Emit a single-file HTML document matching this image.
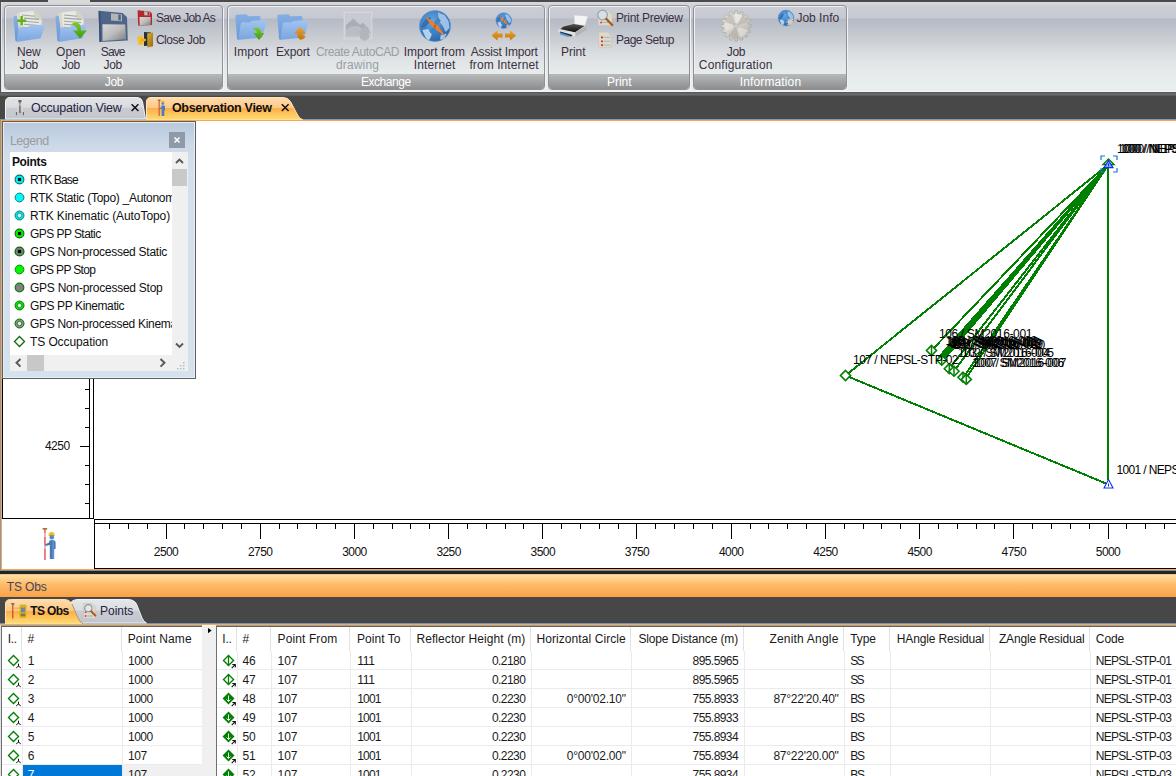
<!DOCTYPE html><html><head><meta charset="utf-8"><title>Observation View</title><style>
*{box-sizing:border-box;margin:0;padding:0}
html,body{width:1176px;height:776px;overflow:hidden;background:#484848;font-family:"Liberation Sans",sans-serif;font-size:12px;color:#1b1b1b}
.abs{position:absolute}
.t{position:absolute;white-space:nowrap;display:block}
#ribbon{position:absolute;left:0;top:0;width:1176px;height:92px;border-top:2px solid #4a4a4a;border-bottom:1px solid #f4f4f4;
 background:linear-gradient(#d8dade 0,#d1d3d8 3px,#cbced4 4px,#c6c9d1 16px,#b6bac4 17px,#c0c4cc 28px,#cdd1d6 40px,#d9dcdf 50px,#e3e7e8 63px,#e7ecec 75px,#e9eeee 88px)}
#ribbon .ledge{position:absolute;left:0;top:0;width:1px;height:90px;background:#555;box-shadow:1px 0 0 0 #e2e4e8}
#ribbon .ltab{position:absolute;left:48px;top:-2px;width:42px;height:2px;background:#d9dad6}
.grp{position:absolute;top:3px;height:85px;border:1px solid #8e9197;border-radius:4px;box-shadow:1px 1px 0 0 #f0f2f3, inset 1px 1px 0 0 #eef0f2;overflow:hidden}
.grp .lab{position:absolute;left:0;right:0;bottom:0;height:15px;background:linear-gradient(#b7b9ba,#8c8e8f)}
#tabbar{position:absolute;left:0;top:93px;width:1176px;height:27px;background:linear-gradient(#626262 0,#6e6e6e 2px,#484848 3px,#484848 100%);border-bottom:1px solid #8797b0}
#main{position:absolute;left:0;top:120px;width:1176px;height:450px;background:#fff;border-top:1px solid #f5a94e;border-bottom:1px solid #f5a94e;overflow:hidden}
#bottomhdr{position:absolute;left:0;top:574px;width:1176px;height:23px;background:linear-gradient(#d8b070 0,#ffe0a0 1px,#ffd48f 4px,#fdbb6a 45%,#fba146 100%)}
#band{position:absolute;left:0;top:570px;width:1176px;height:4px;background:#242424;border-top:1px solid #7d8aa0}
#btabs{position:absolute;left:0;top:597px;width:1176px;height:27px;background:#474747}
.tbl{position:absolute;top:625px;height:160px;background:#fff;overflow:hidden}
.hl{position:absolute;height:1px;background:#ebebeb}
.vl{position:absolute;width:1px;background:#ebebeb}
</style></head><body>
<div id="ribbon"><div class="ltab"></div><div class="ledge"></div>
<div class="grp" style="left:4px;width:219px"><div class="lab"></div></div>
<div class="grp" style="left:227px;width:318px"><div class="lab"></div></div>
<div class="grp" style="left:548px;width:142px"><div class="lab"></div></div>
<div class="grp" style="left:693px;width:154px"><div class="lab"></div></div>
<span class="t" style="left:17.00px;top:42.84px;font-size:12px;line-height:14px;letter-spacing:-0.135px;color:#3a3042;">New</span>
<span class="t" style="left:19.40px;top:55.84px;font-size:12px;line-height:14px;letter-spacing:-0.249px;color:#3a3042;">Job</span>
<span class="t" style="left:56.00px;top:42.84px;font-size:12px;line-height:14px;letter-spacing:0.062px;color:#3a3042;">Open</span>
<span class="t" style="left:61.40px;top:55.84px;font-size:12px;line-height:14px;letter-spacing:-0.249px;color:#3a3042;">Job</span>
<span class="t" style="left:100.80px;top:42.84px;font-size:12px;line-height:14px;letter-spacing:-0.888px;color:#3a3042;">Save</span>
<span class="t" style="left:103.40px;top:55.84px;font-size:12px;line-height:14px;letter-spacing:-0.249px;color:#3a3042;">Job</span>
<span class="t" style="left:155.90px;top:9.24px;font-size:12px;line-height:14px;letter-spacing:-0.682px;color:#3a3042;">Save Job As</span>
<span class="t" style="left:155.90px;top:31.24px;font-size:12px;line-height:14px;letter-spacing:-0.473px;color:#3a3042;">Close Job</span>
<span class="t" style="left:233.80px;top:42.84px;font-size:12px;line-height:14px;letter-spacing:0.066px;color:#3a3042;">Import</span>
<span class="t" style="left:276.00px;top:42.84px;font-size:12px;line-height:14px;letter-spacing:-0.180px;color:#3a3042;">Export</span>
<span class="t" style="left:315.90px;top:42.84px;font-size:12px;line-height:14px;letter-spacing:-0.393px;color:#9a9da3;">Create AutoCAD</span>
<span class="t" style="left:335.90px;top:55.84px;font-size:12px;line-height:14px;letter-spacing:0.168px;color:#9a9da3;">drawing</span>
<span class="t" style="left:403.70px;top:42.84px;font-size:12px;line-height:14px;letter-spacing:-0.003px;color:#3a3042;">Import from</span>
<span class="t" style="left:413.70px;top:55.84px;font-size:12px;line-height:14px;letter-spacing:0.151px;color:#3a3042;">Internet</span>
<span class="t" style="left:470.80px;top:42.84px;font-size:12px;line-height:14px;letter-spacing:-0.196px;color:#3a3042;">Assist Import</span>
<span class="t" style="left:469.40px;top:55.84px;font-size:12px;line-height:14px;letter-spacing:0.091px;color:#3a3042;">from Internet</span>
<span class="t" style="left:560.90px;top:42.84px;font-size:12px;line-height:14px;letter-spacing:0.005px;color:#3a3042;">Print</span>
<span class="t" style="left:615.90px;top:9.24px;font-size:12px;line-height:14px;letter-spacing:-0.307px;color:#3a3042;">Print Preview</span>
<span class="t" style="left:615.90px;top:31.24px;font-size:12px;line-height:14px;letter-spacing:-0.462px;color:#3a3042;">Page Setup</span>
<span class="t" style="left:726.80px;top:42.84px;font-size:12px;line-height:14px;letter-spacing:-0.382px;color:#3a3042;">Job</span>
<span class="t" style="left:698.80px;top:55.84px;font-size:12px;line-height:14px;letter-spacing:0.187px;color:#3a3042;">Configuration</span>
<span class="t" style="left:796.40px;top:9.24px;font-size:12px;line-height:14px;letter-spacing:0.013px;color:#3a3042;">Job Info</span>
<span class="t" style="left:104.80px;top:73.24px;font-size:12px;line-height:14px;letter-spacing:-0.382px;color:#fff;">Job</span>
<span class="t" style="left:360.90px;top:73.24px;font-size:12px;line-height:14px;letter-spacing:-0.459px;color:#fff;">Exchange</span>
<span class="t" style="left:606.90px;top:73.24px;font-size:12px;line-height:14px;letter-spacing:0.005px;color:#fff;">Print</span>
<span class="t" style="left:739.80px;top:73.24px;font-size:12px;line-height:14px;letter-spacing:0.125px;color:#fff;">Information</span>
<svg class="abs" style="left:0;top:-2px" width="860" height="92" viewBox="0 0 860 92">
<defs>
<linearGradient id="fb" x1="0" y1="0" x2="0" y2="1"><stop offset="0" stop-color="#a3c4f0"/><stop offset="1" stop-color="#7aa6e0"/></linearGradient>
<linearGradient id="fbk" x1="0" y1="0" x2="0" y2="1"><stop offset="0" stop-color="#86aee4"/><stop offset="1" stop-color="#6a98d6"/></linearGradient>
<linearGradient id="ga" x1="0" y1="0" x2="0" y2="1"><stop offset="0" stop-color="#7ccc28"/><stop offset="1" stop-color="#3f9a10"/></linearGradient>
<linearGradient id="oa" x1="0" y1="0" x2="0" y2="1"><stop offset="0" stop-color="#f0a030"/><stop offset="1" stop-color="#c07808"/></linearGradient>
<linearGradient id="mt" x1="0" y1="0" x2="1" y2="1"><stop offset="0" stop-color="#d8d8d8"/><stop offset=".5" stop-color="#bdbdbd"/><stop offset="1" stop-color="#7c7c7c"/></linearGradient>
<radialGradient id="gl" cx=".4" cy=".35" r=".7"><stop offset="0" stop-color="#6aa6e0"/><stop offset=".6" stop-color="#3a7cc0"/><stop offset="1" stop-color="#2a64a6"/></radialGradient>
<linearGradient id="gr" x1="0" y1="0" x2="1" y2="1"><stop offset="0" stop-color="#e4e1dc"/><stop offset=".5" stop-color="#d2cec8"/><stop offset="1" stop-color="#b8b4ae"/></linearGradient>
<linearGradient id="dr" x1="0" y1="0" x2="1" y2="1"><stop offset="0" stop-color="#e0b030"/><stop offset="1" stop-color="#96680a"/></linearGradient>
<linearGradient id="pk" x1="0" y1="0" x2="0" y2="1"><stop offset="0" stop-color="#555"/><stop offset="1" stop-color="#111"/></linearGradient>
</defs>
<g transform="translate(13,10)"><path d="M0.5 7.5 Q0.5 6 2 6 L4 6 L7 30 L4 31.5 Q2.5 31.5 2.3 30 Z" fill="url(#fbk)"/><path d="M3.5 3.5 L8 2 L20 1 Q27 4.5 28.8 11 L27.5 23 L7 27 Z" fill="#dddacb"/><path d="M6.5 2.2 L20.5 0.6 Q27.5 4 29 10.5 L27.8 22 L8 26 Z" fill="#ebe9dd" stroke="#cfcdbf" stroke-width=".5"/><path d="M20.5 0.6 Q27.5 4 29 10.5 L22 9 Z" fill="#d5d2c2"/><path d="M9 5.0 L22 6.3" stroke="#98a6b4" stroke-width="1.1" fill="none"/><path d="M11 8.1 L26 9.4" stroke="#98a6b4" stroke-width="1.1" fill="none"/><path d="M11 11.2 L26 12.5" stroke="#98a6b4" stroke-width="1.1" fill="none"/><path d="M11 14.3 L26 15.600000000000001" stroke="#98a6b4" stroke-width="1.1" fill="none"/><path d="M9 17.4 L26 18.7" stroke="#98a6b4" stroke-width="1.1" fill="none"/><path d="M4.2 9.6 H13.2 V12 H4.2 Z M7.5 6 H9.9 V15.6 H7.5 Z" fill="#5db31c"/><path d="M5.8 18 Q6 17 7 17 L14.5 17.6 L16.5 15.8 L31.2 14.4 Q32.4 14.4 32 15.6 L27.6 28.2 L5 31.8 Q3.6 31.8 3.9 30.4 Z" fill="url(#fb)"/></g>
<g transform="translate(55,10)"><path d="M0.5 7.5 Q0.5 6 2 6 L4 6 L7 30 L4 31.5 Q2.5 31.5 2.3 30 Z" fill="url(#fbk)"/><path d="M3.5 3.5 L8 2 L20 1 Q27 4.5 28.8 11 L27.5 23 L7 27 Z" fill="#dddacb"/><path d="M6.5 2.2 L20.5 0.6 Q27.5 4 29 10.5 L27.8 22 L8 26 Z" fill="#ebe9dd" stroke="#cfcdbf" stroke-width=".5"/><path d="M20.5 0.6 Q27.5 4 29 10.5 L22 9 Z" fill="#d5d2c2"/><path d="M9 5.0 L22 6.3" stroke="#98a6b4" stroke-width="1.1" fill="none"/><path d="M9 8.1 L26 9.4" stroke="#98a6b4" stroke-width="1.1" fill="none"/><path d="M9 11.2 L26 12.5" stroke="#98a6b4" stroke-width="1.1" fill="none"/><path d="M9 14.3 L26 15.600000000000001" stroke="#98a6b4" stroke-width="1.1" fill="none"/><path d="M9 17.4 L26 18.7" stroke="#98a6b4" stroke-width="1.1" fill="none"/><path d="M5.8 18 Q6 17 7 17 L14.5 17.6 L16.5 15.8 L31.2 14.4 Q32.4 14.4 32 15.6 L27.6 28.2 L5 31.8 Q3.6 31.8 3.9 30.4 Z" fill="url(#fb)"/></g>
<path d="M71 24.5 Q76 20.5 79.5 24 Q81 26 81 30.5 H87 L80 38.5 L73 30.5 H77.5 Q77.5 26 71 24.5 Z" fill="url(#ga)"/>
<path d="M98.6 10.8 L122.5 13 L127 17.2 L127.8 40.5 L99.5 42 Z" fill="#4c6588"/>
<path d="M98.6 10.8 L100.3 11.5 L101 41.8 L99.5 42 Z" fill="#3a4f6e"/>
<path d="M111 13.2 L122 14.6 L122 21.2 L111 20.6 Z" fill="#b4b4b4"/><path d="M118.3 14.5 L120.8 14.8 L120.8 20.4 L118.3 20.2 Z" fill="#4c6588"/>
<path d="M102.5 24.2 L125.2 24.6 L126 39.2 L102.5 41 Z" fill="url(#mt)"/>
<path d="M137.6 10.2 L150 11.4 L152 13.4 L152 25 L138.2 25.8 Z" fill="#b5282c"/>
<path d="M144.2 11.2 L149.6 11.8 L149.6 15.6 L144.2 15.2 Z" fill="#c0c0c0"/><path d="M147.6 11.8 L149 12 L149 15.4 L147.6 15.3 Z" fill="#b5282c"/>
<path d="M139.5 17 L150.6 17 L150.8 24.9 L139.7 25.6 Z" fill="url(#mt)"/>
<path d="M144 32 L151 32.4 L151 45.5 L144 46 Z" fill="#27313d"/>
<path d="M147.2 33.6 L153 32.4 L153 46.2 L147.4 47.6 Z" fill="url(#dr)"/>
<path d="M137.2 37 L141.5 35.6 L143 37.5 L146.2 39.8 L143.4 42.6 L143.6 44.6 L138.6 45.2 Z" fill="#f2c026"/><path d="M141 39 H146 V41 H141Z" fill="#f0a81c"/>
<g transform="translate(235,14)"><path d="M0.3 2.2 Q0.3 0.8 1.6 0.8 L11.5 0.3 L13.2 2.2 L24 2 Q25.4 2 25.4 3.4 L25.4 8 L6 10 L4.4 25.6 L3.2 25.8 Q2.2 25.8 2 24.6 Z" fill="url(#fbk)"/><path d="M6 9.2 Q6.2 8.2 7.2 8.2 L14.5 8.6 L16.2 7 L31 5.8 Q32.2 5.8 31.8 7 L27 23.6 L4.4 25.8 Q3.2 25.8 3.5 24.6 Z" fill="url(#fb)"/></g>
<path d="M252 28.6 Q257 26 260 29 Q261 30.5 261 33 H264.6 L259 40 L253.4 33 H257 Q257 30 252 28.6 Z" fill="url(#ga)"/>
<g transform="translate(277,14)"><path d="M0.3 2.2 Q0.3 0.8 1.6 0.8 L11.5 0.3 L13.2 2.2 L24 2 Q25.4 2 25.4 3.4 L25.4 8 L6 10 L4.4 25.6 L3.2 25.8 Q2.2 25.8 2 24.6 Z" fill="url(#fbk)"/><path d="M6 9.2 Q6.2 8.2 7.2 8.2 L14.5 8.6 L16.2 7 L31 5.8 Q32.2 5.8 31.8 7 L27 23.6 L4.4 25.8 Q3.2 25.8 3.5 24.6 Z" fill="url(#fb)"/></g>
<path d="M294 33.6 L300 27 L306 33.6 H302.6 Q302.4 36.5 305.6 36.6 Q304 40 300 39.6 Q297.4 38.6 297.4 33.6 Z" fill="url(#oa)"/>
<rect x="344.2" y="12.2" width="27.6" height="26.6" fill="#c7cad0" stroke="#d9dbdf" stroke-width="1"/>
<path d="M346 36 V25 L353.5 18.5 L360 25 L362.5 22.5 L369 29 V36 Z" fill="#a9adb5"/><path d="M346 36 V30 Q353 24 360 27 L364 31 V36 Z" fill="#b9bdc4"/>
<path d="M357.5 33 L364.5 26.5 L371.5 33 H369 V38.6 L364.5 41 L360 38.6 V33 Z" fill="#b2b5bc" opacity=".95"/>
<circle cx="435" cy="26" r="15.6" fill="url(#gl)" stroke="#5a98d4" stroke-width=".6"/><polygon points="422.3,24.1 426.2,18.2 431.1,17.2 429.1,23.1 425.2,27.0 421.4,27.9" fill="#2e68a8" opacity=".8"/><polygon points="422.3,29.9 428.2,28.9 432.1,33.8 430.1,38.7 428.2,40.6 425.2,36.7" fill="#b4d0ec"/><polygon points="437.9,12.3 444.8,15.3 448.6,21.1 449.6,27.9 445.7,31.9 442.8,26.0 438.9,21.1" fill="#a8c8ea" opacity=".9"/><polygon points="440.9,34.8 446.7,33.8 443.8,39.6 439.9,39.6" fill="#b4d0ec" opacity=".9"/><polygon points="424.8,16.2 436.8,23.9 445.7,36.7 433.2,28.1" fill="#f07c28"/><polygon points="429.1,30.9 434.0,27.0 436.0,28.9 432.1,34.8" fill="#3c86c0"/><polygon points="440.9,21.1 436.0,25.0 434.0,23.1 437.9,17.2" fill="#3c86c0"/><circle cx="435" cy="26" r="1.2" fill="#c85c10"/>
<circle cx="503.7" cy="20.6" r="7.8" fill="url(#gl)" stroke="#5a98d4" stroke-width=".6"/><polygon points="497.4,19.6 499.3,16.7 501.8,16.2 500.8,19.1 498.8,21.1 496.9,21.6" fill="#2e68a8" opacity=".8"/><polygon points="497.4,22.6 500.3,22.1 502.2,24.5 501.3,26.9 500.3,27.9 498.8,26.0" fill="#b4d0ec"/><polygon points="505.2,13.8 508.6,15.2 510.5,18.2 511.0,21.6 509.1,23.5 507.6,20.6 505.6,18.2" fill="#a8c8ea" opacity=".9"/><polygon points="506.6,25.0 509.6,24.5 508.1,27.4 506.1,27.4" fill="#b4d0ec" opacity=".9"/><polygon points="498.6,15.7 504.6,19.5 509.1,26.0 502.8,21.7" fill="#f07c28"/><polygon points="500.8,23.0 503.2,21.1 504.2,22.1 502.2,25.0" fill="#3c86c0"/><polygon points="506.6,18.2 504.2,20.1 503.2,19.1 505.2,16.2" fill="#3c86c0"/><circle cx="503.7" cy="20.6" r="0.6" fill="#c85c10"/>
<path d="M491.4 35.5 L497.6 30.4 V33.6 H502.6 V37.4 H497.6 V40.6 Z" fill="url(#oa)"/><path d="M516.2 35.5 L510 30.4 V33.6 H505 V37.4 H510 V40.6 Z" fill="url(#oa)"/>
<path d="M574.2 15 L587.8 16.2 L585 25.4 L574.6 24.6 Z" fill="#f4f4f4" stroke="#cfcfcf" stroke-width=".5"/>
<path d="M564 25.6 L573 23.6 L586.6 26.2 L586.8 29.6 L575.4 36.6 L558.2 31.4 L557.8 29.2 Z" fill="#c9c9c9"/>
<path d="M563.4 26.4 L573.6 24 L584.4 26 L575 32.2 L560.4 29 Z" fill="url(#pk)"/>
<path d="M575 32.2 L586.6 26.2 L586.8 30 L575.6 36.8 Z" fill="#b5b5b5"/>
<path d="M558 29.4 L575 32.6 L575.4 36.6 L558.2 31.6 Z" fill="#e2e2e2"/>
<path d="M560 31.6 L572.6 35 L571 36.6 L560.6 33.6 Z" fill="#222"/><path d="M560.2 32.6 L569.6 35.4 L568.6 37 L560 34.4 Z" fill="#4a9ae0"/>
<path d="M598.2 10.4 H608 L612 14.4 V25.4 H598.2 Z" fill="#dcdacc" stroke="#c6c4b6" stroke-width=".5"/>
<circle cx="601.2" cy="22.4" r="1" fill="#e03030"/><path d="M603 22.4 H610" stroke="#aab" stroke-width="1"/>
<circle cx="602.6" cy="15" r="4.8" fill="#d4e0ea" stroke="#9aa0a6" stroke-width="1.2"/>
<path d="M606.4 19 L612.2 25" stroke="#b0561a" stroke-width="2.4" stroke-linecap="round"/>
<path d="M598.6 32.2 H607.6 L611.6 36.2 V47.6 H598.6 Z" fill="#dcdacc" stroke="#c6c4b6" stroke-width=".5"/>
<circle cx="602" cy="37.4" r="1.1" fill="#e03030"/><path d="M603.6 37.4 H610.4" stroke="#b4b8b8" stroke-width="1.2"/>
<circle cx="602" cy="41.3" r="1.1" fill="#e03030"/><path d="M603.6 41.3 H610.4" stroke="#b4b8b8" stroke-width="1.2"/>
<circle cx="602" cy="45.1" r="1.1" fill="#e03030"/><path d="M603.6 45.1 H610.4" stroke="#b4b8b8" stroke-width="1.2"/>
<polygon points="748.5,24.5 751.4,24.7 751.4,27.3 748.5,27.5 748.1,29.3 750.8,30.6 749.8,33.0 747.0,32.1 746.0,33.7 747.9,35.9 746.1,37.7 743.9,35.8 742.3,36.8 743.2,39.6 740.8,40.6 739.5,37.9 737.7,38.3 737.5,41.2 734.9,41.2 734.7,38.3 732.9,37.9 731.6,40.6 729.2,39.6 730.1,36.8 728.5,35.8 726.3,37.7 724.5,35.9 726.4,33.7 725.4,32.1 722.6,33.0 721.6,30.6 724.3,29.3 723.9,27.5 721.0,27.3 721.0,24.7 723.9,24.5 724.3,22.7 721.6,21.4 722.6,19.0 725.4,19.9 726.4,18.3 724.5,16.1 726.3,14.3 728.5,16.2 730.1,15.2 729.2,12.4 731.6,11.4 732.9,14.1 734.7,13.7 734.9,10.8 737.5,10.8 737.7,13.7 739.5,14.1 740.8,11.4 743.2,12.4 742.3,15.2 743.9,16.2 746.1,14.3 747.9,16.1 746.0,18.3 747.0,19.9 749.8,19.0 750.8,21.4 748.1,22.7" fill="url(#gr)" stroke="#a8a49e" stroke-width=".6"/>
<path d="M736.2 26 L734.1 14.0 A12.2 12.2 0 0 1 742.3 15.4 Z" fill="#fff" opacity="0.45"/>
<path d="M736.2 26 L742.3 15.4 A12.2 12.2 0 0 1 747.7 21.8 Z" fill="#9a958e" opacity="0.25"/>
<path d="M736.2 26 L747.7 30.2 A12.2 12.2 0 0 1 740.4 37.5 Z" fill="#fff" opacity="0.35"/>
<path d="M736.2 26 L738.3 38.0 A12.2 12.2 0 0 1 728.4 35.3 Z" fill="#8e8982" opacity="0.28"/>
<path d="M736.2 26 L725.6 32.1 A12.2 12.2 0 0 1 724.7 21.8 Z" fill="#fff" opacity="0.3"/>
<path d="M736.2 26 L724.7 21.8 A12.2 12.2 0 0 1 732.0 14.5 Z" fill="#8e8982" opacity="0.22"/>
<circle cx="736.2" cy="26" r="2.3" fill="#c9cdd4" stroke="#aaa6a0" stroke-width=".5"/>
<circle cx="786" cy="18" r="7.9" fill="url(#gl)" stroke="#5a98d4" stroke-width=".6"/><polygon points="779.6,17.0 781.6,14.1 784.0,13.6 783.0,16.5 781.1,18.5 779.1,19.0" fill="#2e68a8" opacity=".8"/><polygon points="779.6,20.0 782.5,19.5 784.5,21.9 783.5,24.4 782.5,25.4 781.1,23.4" fill="#b4d0ec"/><polygon points="787.5,11.1 790.9,12.6 792.9,15.5 793.4,19.0 791.4,21.0 790.0,18.0 788.0,15.5" fill="#a8c8ea" opacity=".9"/><polygon points="789.0,22.4 791.9,21.9 790.4,24.9 788.5,24.9" fill="#b4d0ec" opacity=".9"/>
<polygon points="792.8,21.4 794.3,21.4 794.3,22.6 792.8,22.6 792.5,23.4 793.5,24.4 792.7,25.2 791.7,24.2 790.9,24.5 790.9,26.0 789.7,26.0 789.7,24.5 788.9,24.2 787.9,25.2 787.1,24.4 788.1,23.4 787.8,22.6 786.3,22.6 786.3,21.4 787.8,21.4 788.1,20.6 787.1,19.6 787.9,18.8 788.9,19.8 789.7,19.5 789.7,18.0 790.9,18.0 790.9,19.5 791.7,19.8 792.7,18.8 793.5,19.6 792.5,20.6" fill="#d0ccc6" stroke="#aaa" stroke-width=".3"/>
</svg>
</div>
<div class="abs" style="left:0;top:92px;width:1176px;height:1px;background:#5a5a5a"></div>
<div id="tabbar">
<svg class="abs" style="left:0;top:0" width="320" height="27" viewBox="0 0 320 27"><defs><linearGradient id="tg" x1="0" y1="0" x2="0" y2="1"><stop offset="0" stop-color="#e2e4e8"/><stop offset=".45" stop-color="#d9dbe0"/><stop offset=".5" stop-color="#c9ccd2"/><stop offset="1" stop-color="#c3c6cc"/></linearGradient><linearGradient id="to" x1="0" y1="0" x2="0" y2="1"><stop offset="0" stop-color="#ffdcae"/><stop offset=".45" stop-color="#fec888"/><stop offset=".48" stop-color="#fcae46"/><stop offset="1" stop-color="#ffdd74"/></linearGradient></defs><path d="M5.5 26 V9 Q5.5 4.5 10 4.5 H137 Q141.5 4.5 142.5 8.5 L145.5 26 Z" fill="url(#tg)" stroke="#f2f3f5" stroke-width="1"/><path d="M146.5 27 V9 Q146.5 4.5 151 4.5 H283 Q288 4.5 290.5 8.5 L297 21 Q299 25.5 303 27 Z" fill="url(#to)" stroke="#ffe4b8" stroke-width="1"/></svg>
<span class="t" style="left:30.90px;top:8.17px;font-size:12.5px;line-height:14px;letter-spacing:-0.191px;color:#1f2340;">Occupation View</span>
<span class="t" style="left:171.90px;top:8.17px;font-size:12.5px;line-height:14px;letter-spacing:-0.310px;font-weight:bold;color:#111;">Observation View</span>
<svg class="abs" style="left:0;top:0" width="320" height="27" viewBox="0 93 320 27">
<path d="M131.6 104.2 L138.4 111 M138.4 104.2 L131.6 111" stroke="#111" stroke-width="1.5" fill="none"/>
<path d="M281.8 104.2 L288.59999999999997 111 M288.59999999999997 104.2 L281.8 111" stroke="#111" stroke-width="1.5" fill="none"/>
<rect x="18.3" y="100" width="3.2" height="2.2" fill="#6e625c"/><rect x="19" y="102" width="1.8" height="11.2" fill="#7c7c7c"/><path d="M19.2 103.5 L16.5 114.5 M20.6 103.5 L23.3 114.5" stroke="#d4d5d8" stroke-width="1.1" fill="none"/><rect x="15.9" y="112" width="1.2" height="3.2" fill="#6a6a6a"/><rect x="22.8" y="112" width="1.2" height="3.2" fill="#6a6a6a"/>
<rect x="158.6" y="100" width="1.1" height="16" fill="#d05030"/><rect x="157.8" y="99.6" width="2.8" height="1.3" fill="#907030"/><path d="M161 102.6 Q161 100.6 162.8 100.6 Q164.6 100.6 164.6 102.6Z" fill="#e8c020"/><circle cx="162.8" cy="103.6" r="1.4" fill="#5888c8"/><path d="M161.4 105.4 H164.4 Q165 105.4 165 106.4 V110.5 H164.3 V116 H161.6 V108.6 L159.6 109.2 L159.4 108.2 L161.4 107 Z" fill="#4a7cc0"/>
</svg>
</div>
<div id="main">
<div class="abs" style="left:0;top:-121px;width:1176px;height:776px">
<svg class="abs" style="left:0;top:0" width="1176" height="572" viewBox="0 0 1176 572" shape-rendering="crispEdges">
<rect x="2" y="121" width="1" height="398" fill="#000"/>
<rect x="89" y="121" width="1" height="398" fill="#000"/>
<rect x="93" y="121" width="1" height="398" fill="#000"/>
<rect x="2" y="518" width="92" height="1" fill="#000"/>
<rect x="94" y="519" width="1" height="50" fill="#000"/>
<rect x="94" y="519" width="1083" height="1" fill="#000"/>
<rect x="94" y="523" width="1083" height="1" fill="#000"/>
<rect x="94" y="568" width="1083" height="1" fill="#000"/>
<rect x="109" y="524" width="1" height="5" fill="#000"/>
<rect x="128" y="524" width="1" height="5" fill="#000"/>
<rect x="147" y="524" width="1" height="5" fill="#000"/>
<rect x="166" y="524" width="1" height="15" fill="#000"/>
<rect x="184" y="524" width="1" height="5" fill="#000"/>
<rect x="203" y="524" width="1" height="5" fill="#000"/>
<rect x="222" y="524" width="1" height="5" fill="#000"/>
<rect x="241" y="524" width="1" height="5" fill="#000"/>
<rect x="260" y="524" width="1" height="15" fill="#000"/>
<rect x="279" y="524" width="1" height="5" fill="#000"/>
<rect x="297" y="524" width="1" height="5" fill="#000"/>
<rect x="316" y="524" width="1" height="5" fill="#000"/>
<rect x="335" y="524" width="1" height="5" fill="#000"/>
<rect x="354" y="524" width="1" height="15" fill="#000"/>
<rect x="373" y="524" width="1" height="5" fill="#000"/>
<rect x="392" y="524" width="1" height="5" fill="#000"/>
<rect x="410" y="524" width="1" height="5" fill="#000"/>
<rect x="429" y="524" width="1" height="5" fill="#000"/>
<rect x="448" y="524" width="1" height="15" fill="#000"/>
<rect x="467" y="524" width="1" height="5" fill="#000"/>
<rect x="486" y="524" width="1" height="5" fill="#000"/>
<rect x="505" y="524" width="1" height="5" fill="#000"/>
<rect x="523" y="524" width="1" height="5" fill="#000"/>
<rect x="542" y="524" width="1" height="15" fill="#000"/>
<rect x="561" y="524" width="1" height="5" fill="#000"/>
<rect x="580" y="524" width="1" height="5" fill="#000"/>
<rect x="599" y="524" width="1" height="5" fill="#000"/>
<rect x="618" y="524" width="1" height="5" fill="#000"/>
<rect x="636" y="524" width="1" height="15" fill="#000"/>
<rect x="655" y="524" width="1" height="5" fill="#000"/>
<rect x="674" y="524" width="1" height="5" fill="#000"/>
<rect x="693" y="524" width="1" height="5" fill="#000"/>
<rect x="712" y="524" width="1" height="5" fill="#000"/>
<rect x="731" y="524" width="1" height="15" fill="#000"/>
<rect x="750" y="524" width="1" height="5" fill="#000"/>
<rect x="768" y="524" width="1" height="5" fill="#000"/>
<rect x="787" y="524" width="1" height="5" fill="#000"/>
<rect x="806" y="524" width="1" height="5" fill="#000"/>
<rect x="825" y="524" width="1" height="15" fill="#000"/>
<rect x="844" y="524" width="1" height="5" fill="#000"/>
<rect x="863" y="524" width="1" height="5" fill="#000"/>
<rect x="881" y="524" width="1" height="5" fill="#000"/>
<rect x="900" y="524" width="1" height="5" fill="#000"/>
<rect x="919" y="524" width="1" height="15" fill="#000"/>
<rect x="938" y="524" width="1" height="5" fill="#000"/>
<rect x="957" y="524" width="1" height="5" fill="#000"/>
<rect x="976" y="524" width="1" height="5" fill="#000"/>
<rect x="994" y="524" width="1" height="5" fill="#000"/>
<rect x="1013" y="524" width="1" height="15" fill="#000"/>
<rect x="1032" y="524" width="1" height="5" fill="#000"/>
<rect x="1051" y="524" width="1" height="5" fill="#000"/>
<rect x="1070" y="524" width="1" height="5" fill="#000"/>
<rect x="1089" y="524" width="1" height="5" fill="#000"/>
<rect x="1108" y="524" width="1" height="15" fill="#000"/>
<rect x="1126" y="524" width="1" height="5" fill="#000"/>
<rect x="1145" y="524" width="1" height="5" fill="#000"/>
<rect x="1164" y="524" width="1" height="5" fill="#000"/>
<rect x="1183" y="524" width="1" height="5" fill="#000"/>
<rect x="85" y="503" width="4" height="1" fill="#000"/>
<rect x="85" y="484" width="4" height="1" fill="#000"/>
<rect x="85" y="465" width="4" height="1" fill="#000"/>
<rect x="80" y="446" width="9" height="1" fill="#000"/>
<rect x="85" y="427" width="4" height="1" fill="#000"/>
<rect x="85" y="408" width="4" height="1" fill="#000"/>
<rect x="85" y="389" width="4" height="1" fill="#000"/>
<rect x="85" y="370" width="4" height="1" fill="#000"/>
<rect x="80" y="351" width="9" height="1" fill="#000"/>
<rect x="85" y="332" width="4" height="1" fill="#000"/>
<rect x="85" y="313" width="4" height="1" fill="#000"/>
<rect x="85" y="294" width="4" height="1" fill="#000"/>
<rect x="85" y="276" width="4" height="1" fill="#000"/>
<rect x="80" y="257" width="9" height="1" fill="#000"/>
<rect x="85" y="238" width="4" height="1" fill="#000"/>
<rect x="85" y="219" width="4" height="1" fill="#000"/>
<rect x="85" y="200" width="4" height="1" fill="#000"/>
<rect x="85" y="181" width="4" height="1" fill="#000"/>
<rect x="80" y="162" width="9" height="1" fill="#000"/>
<rect x="85" y="143" width="4" height="1" fill="#000"/>
<rect x="85" y="124" width="4" height="1" fill="#000"/>
<line x1="1108.5" y1="164.5" x2="845.5" y2="375.5" stroke="#008000" stroke-width="2"/>
<line x1="845.5" y1="375.5" x2="1108.5" y2="484.5" stroke="#008000" stroke-width="2"/>
<rect x="1107" y="168" width="2" height="312" fill="#008000"/>
<line x1="1108.5" y1="164.5" x2="931.5" y2="350.5" stroke="#008000" stroke-width="2"/>
<line x1="1108.5" y1="164.5" x2="949.3" y2="368.7" stroke="#008000" stroke-width="2"/>
<line x1="1108.5" y1="164.5" x2="954" y2="371.2" stroke="#008000" stroke-width="2"/>
<line x1="1108.5" y1="164.5" x2="963.4" y2="377.4" stroke="#008000" stroke-width="2"/>
<line x1="1108.5" y1="164.5" x2="965.6" y2="379" stroke="#008000" stroke-width="2"/>
<polygon points="1108.5,164.5 939.3,356.6 943,360.6" fill="#008000" stroke="#008000" stroke-width="2"/>
</svg>
<svg class="abs" style="left:0;top:0" width="1176" height="572" viewBox="0 0 1176 572">
<path d="M845.5 370.5 L850.5 375.5 L845.5 380.5 L840.5 375.5 Z" fill="#fff" stroke="#008000" stroke-width="1.6"/>
<path d="M931.5 345.5 L936.5 350.5 L931.5 355.5 L926.5 350.5 Z" fill="#fff" stroke="#008000" stroke-width="1.6"/><path d="M931.5 345.5 V355.5" stroke="#008000" stroke-width="1.5"/>
<path d="M941.7 355.2 L946.7 360.2 L941.7 365.2 L936.7 360.2 Z" fill="#fff" stroke="#008000" stroke-width="1.6"/><path d="M941.7 355.2 V365.2" stroke="#008000" stroke-width="1.5"/>
<path d="M949.3 363.7 L954.3 368.7 L949.3 373.7 L944.3 368.7 Z" fill="#fff" stroke="#008000" stroke-width="1.6"/><path d="M949.3 363.7 V373.7" stroke="#008000" stroke-width="1.5"/>
<path d="M954 366.2 L959 371.2 L954 376.2 L949 371.2 Z" fill="#fff" stroke="#008000" stroke-width="1.6"/><path d="M954 366.2 V376.2" stroke="#008000" stroke-width="1.5"/>
<path d="M963 372.2 L968 377.2 L963 382.2 L958 377.2 Z" fill="#fff" stroke="#008000" stroke-width="1.6"/><path d="M963 372.2 V382.2" stroke="#008000" stroke-width="1.5"/>
<path d="M966.3 374.4 L971.3 379.4 L966.3 384.4 L961.3 379.4 Z" fill="#fff" stroke="#008000" stroke-width="1.6"/><path d="M966.3 374.4 V384.4" stroke="#008000" stroke-width="1.5"/>
<path d="M1108.5 159 L1114 164.5 L1103 164.5 Z" fill="none" stroke="#008000" stroke-width="1.4"/>
<path d="M1108.5 160.6 L1113 167.6 H1104 Z" fill="#8fb0ff" stroke="#1030f0" stroke-width="1.2"/><rect x="1108" y="163.5" width="1" height="3" fill="#1030f0"/>
<path d="M1105 156 H1101 V160" fill="none" stroke="#1872e0" stroke-width="1.2"/>
<path d="M1113 156 H1117 V160" fill="none" stroke="#1872e0" stroke-width="1.2"/>
<path d="M1105 172 H1101 V168" fill="none" stroke="#1872e0" stroke-width="1.2"/>
<path d="M1113 172 H1117 V168" fill="none" stroke="#1872e0" stroke-width="1.2"/>
<path d="M1108.5 479.6 L1113 488 H1104 Z" fill="#fff" stroke="#1030f0" stroke-width="1.1"/><rect x="1108" y="483.5" width="1" height="3" fill="#1030f0"/>
</svg>
<span class="t" style="left:153.80px;top:545.24px;font-size:12px;line-height:14px;letter-spacing:-0.573px;color:#111;">2500</span>
<span class="t" style="left:248.00px;top:545.24px;font-size:12px;line-height:14px;letter-spacing:-0.573px;color:#111;">2750</span>
<span class="t" style="left:342.20px;top:545.24px;font-size:12px;line-height:14px;letter-spacing:-0.573px;color:#111;">3000</span>
<span class="t" style="left:436.40px;top:545.24px;font-size:12px;line-height:14px;letter-spacing:-0.573px;color:#111;">3250</span>
<span class="t" style="left:530.60px;top:545.24px;font-size:12px;line-height:14px;letter-spacing:-0.573px;color:#111;">3500</span>
<span class="t" style="left:624.80px;top:545.24px;font-size:12px;line-height:14px;letter-spacing:-0.573px;color:#111;">3750</span>
<span class="t" style="left:719.00px;top:545.24px;font-size:12px;line-height:14px;letter-spacing:-0.573px;color:#111;">4000</span>
<span class="t" style="left:813.20px;top:545.24px;font-size:12px;line-height:14px;letter-spacing:-0.573px;color:#111;">4250</span>
<span class="t" style="left:907.40px;top:545.24px;font-size:12px;line-height:14px;letter-spacing:-0.573px;color:#111;">4500</span>
<span class="t" style="left:1001.60px;top:545.24px;font-size:12px;line-height:14px;letter-spacing:-0.573px;color:#111;">4750</span>
<span class="t" style="left:1095.80px;top:545.24px;font-size:12px;line-height:14px;letter-spacing:-0.573px;color:#111;">5000</span>
<span class="t" style="left:44.90px;top:438.64px;font-size:12px;line-height:14px;letter-spacing:-0.498px;color:#111;">4250</span>
<span class="t" style="left:853.00px;top:353.14px;font-size:12px;line-height:14px;letter-spacing:-0.503px;color:#000;">107 / NEPSL-STP-02</span>
<span class="t" style="left:938.90px;top:327.34px;font-size:12px;line-height:14px;letter-spacing:-0.346px;color:#000;">106 / SM2016-001</span>
<span class="t" style="left:945.40px;top:333.84px;font-size:12px;line-height:14px;letter-spacing:-0.471px;color:#000;">105 / SM2016-002</span>
<span class="t" style="left:947.40px;top:334.84px;font-size:12px;line-height:14px;letter-spacing:-0.471px;color:#000;">104 / SM2016-003</span>
<span class="t" style="left:949.40px;top:335.84px;font-size:12px;line-height:14px;letter-spacing:-0.471px;color:#000;">109 / SM2016-008</span>
<span class="t" style="left:951.40px;top:336.84px;font-size:12px;line-height:14px;letter-spacing:-0.471px;color:#000;">108 / SM2016-009</span>
<span class="t" style="left:953.40px;top:337.84px;font-size:12px;line-height:14px;letter-spacing:-0.471px;color:#000;">101 / SM2016-010</span>
<span class="t" style="left:946.40px;top:335.34px;font-size:12px;line-height:14px;letter-spacing:-0.359px;color:#000;">110 / SM2016-011</span>
<span class="t" style="left:950.40px;top:336.84px;font-size:12px;line-height:14px;letter-spacing:-0.359px;color:#000;">111 / SM2016-012</span>
<span class="t" style="left:957.90px;top:345.84px;font-size:12px;line-height:14px;letter-spacing:-0.439px;color:#000;">103 / SM2016-004</span>
<span class="t" style="left:961.90px;top:346.34px;font-size:12px;line-height:14px;letter-spacing:-0.439px;color:#000;">102 / SM2016-005</span>
<span class="t" style="left:973.90px;top:355.84px;font-size:12px;line-height:14px;letter-spacing:-0.408px;color:#000;">100 / SM2016-007</span>
<span class="t" style="left:971.90px;top:356.34px;font-size:12px;line-height:14px;letter-spacing:-0.469px;color:#000;">1007 SM2016-006</span>
<span class="t" style="left:1116.90px;top:142.14px;font-size:12px;line-height:14px;letter-spacing:-0.628px;color:#000;">1000 / NEPSL-STP-01</span>
<span class="t" style="left:1119.40px;top:142.14px;font-size:12px;line-height:14px;letter-spacing:-0.628px;color:#000;">1000 / NEPSL-STP-01</span>
<span class="t" style="left:1121.90px;top:142.14px;font-size:12px;line-height:14px;letter-spacing:-0.622px;color:#000;">100 / NEPSL-STP-01</span>
<span class="t" style="left:1116.40px;top:463.24px;font-size:12px;line-height:14px;letter-spacing:-0.628px;color:#000;">1001 / NEPSL-STP-03</span>
<svg class="abs" style="left:40px;top:526px" width="20" height="36" viewBox="40 526 20 36"><rect x="44.3" y="529" width="1.3" height="31" fill="#e04040"/><rect x="44.3" y="533" width="1.3" height="4" fill="#f4d0d0"/><rect x="44.3" y="545" width="1.3" height="4" fill="#f4d0d0"/><rect x="42.6" y="528" width="4.6" height="1.6" fill="#a07828"/><path d="M48.5 535.5 Q48.5 532 51.5 532 Q54.6 532 54.6 535 L55 536 H48.5Z" fill="#e8c020"/><circle cx="51.8" cy="537.3" r="2.3" fill="#5888c8"/><path d="M49.5 540.5 Q52 539.4 54.6 540.5 Q55.6 541 55.6 543 V549 H54.2 V559 H49.8 V545 L45.5 546 L45 544.4 L49 542.6 Z" fill="#4878b8"/><rect x="52.4" y="541" width="1.6" height="18" fill="#7aa4dc" opacity=".6"/></svg>
<div class="abs" style="left:2px;top:121px;width:194px;height:258px;border:1px solid #5e5e5e;background:linear-gradient(#b8c8db 0,#cbd8e8 22px,#d4dfed 40px,#d6e1ee 100%);box-shadow:inset 0 0 0 1px #e6edf5"></div>
<span class="t" style="left:9.90px;top:133.67px;font-size:12.5px;line-height:14px;letter-spacing:-0.501px;color:#9b9b9b;">Legend</span>
<div class="abs" style="left:169px;top:132px;width:16px;height:16px;background:#8f9aa9"></div>
<svg class="abs" style="left:169px;top:132px" width="16" height="16"><path d="M5.5 5.5 L10.5 10.5 M10.5 5.5 L5.5 10.5" stroke="#fff" stroke-width="1.5"/></svg>
<div class="abs" style="left:10px;top:152px;width:178px;height:219px;background:#f0f0f0"></div>
<div class="abs" style="left:10px;top:152px;width:162px;height:203px;background:#fff;overflow:hidden">
<span class="t" style="left:1.90px;top:2.84px;font-size:12px;line-height:14px;letter-spacing:-0.328px;font-weight:bold;color:#111;">Points</span>
<span class="t" style="left:20.00px;top:20.84px;font-size:12px;line-height:14px;letter-spacing:-0.821px;color:#111;">RTK Base</span>
<span class="t" style="left:20.00px;top:38.84px;font-size:12px;line-height:14px;letter-spacing:-0.291px;color:#111;">RTK Static (Topo) _Autonomous</span>
<span class="t" style="left:20.00px;top:56.84px;font-size:12px;line-height:14px;letter-spacing:-0.072px;color:#111;">RTK Kinematic (AutoTopo)</span>
<span class="t" style="left:20.00px;top:74.84px;font-size:12px;line-height:14px;letter-spacing:-0.555px;color:#111;">GPS PP Static</span>
<span class="t" style="left:20.00px;top:92.84px;font-size:12px;line-height:14px;letter-spacing:-0.266px;color:#111;">GPS Non-processed Static</span>
<span class="t" style="left:20.00px;top:110.84px;font-size:12px;line-height:14px;letter-spacing:-0.653px;color:#111;">GPS PP Stop</span>
<span class="t" style="left:20.00px;top:128.84px;font-size:12px;line-height:14px;letter-spacing:-0.253px;color:#111;">GPS Non-processed Stop</span>
<span class="t" style="left:20.00px;top:146.84px;font-size:12px;line-height:14px;letter-spacing:-0.393px;color:#111;">GPS PP Kinematic</span>
<span class="t" style="left:20.00px;top:164.84px;font-size:12px;line-height:14px;letter-spacing:-0.300px;color:#111;">GPS Non-processed Kinematic</span>
<span class="t" style="left:20.00px;top:182.84px;font-size:12px;line-height:14px;letter-spacing:-0.097px;color:#111;">TS Occupation</span>
</div>
<svg class="abs" style="left:10px;top:170px" width="20" height="180" viewBox="10 170 20 180">
<circle cx="19.5" cy="179.5" r="4.4" fill="#00f4f4" stroke="#0c6c6c" stroke-width="1.1"/><rect x="17.9" y="177.9" width="3.2" height="3.2" fill="#000"/>
<circle cx="19.5" cy="197.5" r="4.4" fill="#00fafa" stroke="#0c7c7c" stroke-width="1"/>
<circle cx="19.5" cy="215.5" r="4.5" fill="#00dede" stroke="#0c7c7c" stroke-width=".9"/><circle cx="19.5" cy="215.5" r="2.2" fill="#d8f8f8" stroke="#0c8c8c" stroke-width=".7"/>
<circle cx="19.5" cy="233.5" r="4.4" fill="#00f400" stroke="#0a6e0a" stroke-width="1.1"/><rect x="17.9" y="231.9" width="3.2" height="3.2" fill="#000"/>
<circle cx="19.5" cy="251.5" r="4.4" fill="#7c807c" stroke="#0a6e0a" stroke-width="1.3"/><rect x="17.9" y="249.9" width="3.2" height="3.2" fill="#000"/>
<circle cx="19.5" cy="269.5" r="4.4" fill="#00f600" stroke="#0a8c0a" stroke-width="1"/>
<circle cx="19.5" cy="287.5" r="4.3" fill="#808080" stroke="#0a7a0a" stroke-width="1.2"/>
<circle cx="19.5" cy="305.5" r="4.5" fill="#00e400" stroke="#0a6e0a" stroke-width=".9"/><circle cx="19.5" cy="305.5" r="2.2" fill="#e4fae4" stroke="#0a6e0a" stroke-width=".7"/>
<circle cx="19.5" cy="323.5" r="4.5" fill="#8a908a" stroke="#0a6e0a" stroke-width="1"/><circle cx="19.5" cy="323.5" r="2.2" fill="#eef2ee" stroke="#0a6e0a" stroke-width=".8"/>
<path d="M19.5 336.5 L24.5 341.5 L19.5 346.5 L14.5 341.5 Z" fill="#fff" stroke="#0a6a0a" stroke-width="1.3"/>
</svg>
<div class="abs" style="left:172px;top:169px;width:15px;height:17px;background:#c9c9c9"></div>
<div class="abs" style="left:27px;top:355px;width:17px;height:16px;background:#c8c8c8"></div>
<svg class="abs" style="left:10px;top:152px" width="178" height="219" viewBox="10 152 178 219"><path d="M176 163 L179.5 159.5 L183 163" fill="none" stroke="#585858" stroke-width="1.9"/><path d="M176 343.5 L179.5 347 L183 343.5" fill="none" stroke="#585858" stroke-width="1.9"/><path d="M20.5 359 L16.5 362.8 L20.5 366.6" fill="none" stroke="#585858" stroke-width="1.9"/><path d="M160.5 359 L164.5 362.8 L160.5 366.6" fill="none" stroke="#585858" stroke-width="1.9"/><g fill="#bcbcbc"><rect x="183" y="362" width="1.5" height="1.5"/><rect x="180" y="365" width="1.5" height="1.5"/><rect x="183" y="365" width="1.5" height="1.5"/><rect x="177" y="368" width="1.5" height="1.5"/><rect x="180" y="368" width="1.5" height="1.5"/><rect x="183" y="368" width="1.5" height="1.5"/></g></svg>
</div>
</div>
<div class="abs" style="left:0;top:120px;width:1px;height:450px;background:#8797b0"></div>
<div class="abs" style="left:1px;top:120px;width:1px;height:450px;background:#f5a94e"></div>
<div id="band"></div>
<div id="bottomhdr"><span class="t" style="left:6.70px;top:5.54px;font-size:12px;line-height:14px;letter-spacing:-0.129px;color:#45455a;">TS Obs</span></div>
<div id="btabs"><div class="abs" style="left:0;top:26px;width:1176px;height:1px;background:#7f8ea5"></div>
<svg class="abs" style="left:0;top:0" width="200" height="27" viewBox="0 597 200 27"><defs><linearGradient id="tg2" x1="0" y1="0" x2="0" y2="1"><stop offset="0" stop-color="#e4e6ea"/><stop offset=".45" stop-color="#dadce1"/><stop offset=".5" stop-color="#c9ccd2"/><stop offset="1" stop-color="#c2c5cb"/></linearGradient><linearGradient id="to2" x1="0" y1="0" x2="0" y2="1"><stop offset="0" stop-color="#ffdcae"/><stop offset=".45" stop-color="#fec888"/><stop offset=".48" stop-color="#fcae46"/><stop offset="1" stop-color="#ffdd74"/></linearGradient></defs><path d="M70 623 V604 Q72 599.5 78 599.5 H128 Q134 599.5 136.5 604 L142 618 Q143.6 621.8 146.5 623 Z" fill="url(#tg2)" stroke="#f0f1f3" stroke-width="1"/><path d="M5.5 624 V604 Q5.5 599.5 10.5 599.5 H64 Q69.5 599.5 72 604 L78 618 Q80 622.5 83.5 624 Z" fill="url(#to2)" stroke="#ffe0aa" stroke-width="1"/><path d="M72 604 L78 618 Q80 622.5 83.5 624" fill="none" stroke="#5a5a6a" stroke-width=".8" opacity=".7"/><rect x="12.2" y="603.5" width="1.2" height="15" fill="#d04030"/><rect x="11.2" y="603" width="3.2" height="1.6" fill="#807050"/><path d="M13.5 607.5 H20 V609 H13.5Z" fill="#e0c050"/><path d="M19.5 606 Q19.5 604.6 21 604.6 H25 Q26.5 604.6 26.5 606 V616.4 Q26.5 617.8 25 617.8 H21 Q19.5 617.8 19.5 616.4Z" fill="#d8b020"/><rect x="21" y="607.6" width="4" height="4.6" fill="#6088b0"/><rect x="20.6" y="613.6" width="4.8" height="2.6" fill="#8c7a3c"/><path d="M83.4 603.4 H92 L95.6 607 V618.6 H83.4 Z" fill="#dcdacc" stroke="#c0beb0" stroke-width=".5"/><circle cx="85.6" cy="612.2" r=".9" fill="#e03030"/><circle cx="85.6" cy="616" r=".9" fill="#e03030"/><circle cx="85.6" cy="608.4" r=".9" fill="#e03030"/><path d="M87.4 616 H93" stroke="#aab" stroke-width="1"/><circle cx="88.4" cy="608.2" r="3.6" fill="#dde8f0" stroke="#8e9499" stroke-width="1.1"/><path d="M91.2 611.2 L95.4 615.6" stroke="#b0561a" stroke-width="2" stroke-linecap="round"/></svg>
<span class="t" style="left:30.20px;top:7.44px;font-size:12px;line-height:14px;letter-spacing:-0.601px;font-weight:bold;color:#111;">TS Obs</span>
<span class="t" style="left:100.00px;top:7.44px;font-size:12px;line-height:14px;letter-spacing:-0.025px;color:#1f2340;">Points</span>
<div class="abs" style="left:0;top:27px;width:1176px;height:1px;background:#f7ab52"></div></div>
<div class="abs" style="left:1px;top:625px;width:201px;height:1px;background:#98a0ac"></div>
<div class="tbl" style="left:1px;top:626px;width:201px;border-left:1px solid #707070;border-top:1px solid #646464">
<div class="vl" style="left:19px;top:0;height:24px;background:#e2e2e2"></div>
<div class="vl" style="left:20px;top:24px;height:140px"></div>
<div class="vl" style="left:119px;top:0;height:24px;background:#e2e2e2"></div>
<div class="vl" style="left:120px;top:24px;height:140px"></div>
<div class="hl" style="left:0;top:42px;width:201px"></div>
<div class="hl" style="left:0;top:61px;width:201px"></div>
<div class="hl" style="left:0;top:80px;width:201px"></div>
<div class="hl" style="left:0;top:99px;width:201px"></div>
<div class="hl" style="left:0;top:118px;width:201px"></div>
<div class="hl" style="left:0;top:137px;width:201px"></div>
<div class="hl" style="left:0;top:156px;width:201px"></div>
<span class="t" style="left:5.70px;top:5.14px;font-size:12px;line-height:14px;letter-spacing:-0.300px;color:#1a1a1a;">I..</span>
<span class="t" style="left:25.60px;top:5.14px;font-size:12px;line-height:14px;letter-spacing:1.027px;color:#1a1a1a;">#</span>
<span class="t" style="left:125.70px;top:5.14px;font-size:12px;line-height:14px;letter-spacing:0.141px;color:#1a1a1a;">Point Name</span>
<div class="abs" style="left:21px;top:138px;width:99px;height:19px;background:#0078d7"></div>
<div class="abs" style="left:121px;top:138px;width:79px;height:19px;background:#f0f0f0"></div>
<span class="t" style="left:25.80px;top:26.84px;font-size:12px;line-height:14px;letter-spacing:-0.758px;color:#1a1a1a;">1</span>
<span class="t" style="left:126.00px;top:26.84px;font-size:12px;line-height:14px;letter-spacing:-0.523px;color:#1a1a1a;">1000</span>
<span class="t" style="left:25.80px;top:45.84px;font-size:12px;line-height:14px;letter-spacing:-0.758px;color:#1a1a1a;">2</span>
<span class="t" style="left:126.00px;top:45.84px;font-size:12px;line-height:14px;letter-spacing:-0.523px;color:#1a1a1a;">1000</span>
<span class="t" style="left:25.80px;top:64.84px;font-size:12px;line-height:14px;letter-spacing:-0.758px;color:#1a1a1a;">3</span>
<span class="t" style="left:126.00px;top:64.84px;font-size:12px;line-height:14px;letter-spacing:-0.523px;color:#1a1a1a;">1000</span>
<span class="t" style="left:25.80px;top:83.84px;font-size:12px;line-height:14px;letter-spacing:-0.758px;color:#1a1a1a;">4</span>
<span class="t" style="left:126.00px;top:83.84px;font-size:12px;line-height:14px;letter-spacing:-0.523px;color:#1a1a1a;">1000</span>
<span class="t" style="left:25.80px;top:102.84px;font-size:12px;line-height:14px;letter-spacing:-0.758px;color:#1a1a1a;">5</span>
<span class="t" style="left:126.00px;top:102.84px;font-size:12px;line-height:14px;letter-spacing:-0.523px;color:#1a1a1a;">1000</span>
<span class="t" style="left:25.80px;top:121.84px;font-size:12px;line-height:14px;letter-spacing:-0.758px;color:#1a1a1a;">6</span>
<span class="t" style="left:126.00px;top:121.84px;font-size:12px;line-height:14px;letter-spacing:-0.373px;color:#1a1a1a;">107</span>
<span class="t" style="left:25.80px;top:140.84px;font-size:12px;line-height:14px;letter-spacing:-0.758px;color:#fff;">7</span>
<span class="t" style="left:126.00px;top:140.84px;font-size:12px;line-height:14px;letter-spacing:-0.373px;color:#1a1a1a;">107</span>
<svg class="abs" style="left:-2px;top:-627px" width="30" height="776" viewBox="0 0 30 776"><path d="M13.5 655.5 L18.5 660.5 L13.5 665.5 L8.5 660.5 Z" fill="#fff" stroke="#008000" stroke-width="1.4"/><path d="M18.5 663.7 V666.5 M16.2 667.9 L18.5 666.1 L20.8 667.9" fill="none" stroke="#111" stroke-width="1"/><path d="M13.5 674.5 L18.5 679.5 L13.5 684.5 L8.5 679.5 Z" fill="#fff" stroke="#008000" stroke-width="1.4"/><path d="M18.5 682.7 V685.5 M16.2 686.9 L18.5 685.1 L20.8 686.9" fill="none" stroke="#111" stroke-width="1"/><path d="M13.5 693.5 L18.5 698.5 L13.5 703.5 L8.5 698.5 Z" fill="#fff" stroke="#008000" stroke-width="1.4"/><path d="M18.5 701.7 V704.5 M16.2 705.9 L18.5 704.1 L20.8 705.9" fill="none" stroke="#111" stroke-width="1"/><path d="M13.5 712.5 L18.5 717.5 L13.5 722.5 L8.5 717.5 Z" fill="#fff" stroke="#008000" stroke-width="1.4"/><path d="M18.5 720.7 V723.5 M16.2 724.9 L18.5 723.1 L20.8 724.9" fill="none" stroke="#111" stroke-width="1"/><path d="M13.5 731.5 L18.5 736.5 L13.5 741.5 L8.5 736.5 Z" fill="#fff" stroke="#008000" stroke-width="1.4"/><path d="M18.5 739.7 V742.5 M16.2 743.9 L18.5 742.1 L20.8 743.9" fill="none" stroke="#111" stroke-width="1"/><path d="M13.5 750.5 L18.5 755.5 L13.5 760.5 L8.5 755.5 Z" fill="#fff" stroke="#008000" stroke-width="1.4"/><path d="M18.5 758.7 V761.5 M16.2 762.9 L18.5 761.1 L20.8 762.9" fill="none" stroke="#111" stroke-width="1"/><path d="M13.5 769.5 L18.5 774.5 L13.5 779.5 L8.5 774.5 Z" fill="#fff" stroke="#008000" stroke-width="1.4"/><path d="M18.5 777.7 V780.5 M16.2 781.9 L18.5 780.1 L20.8 781.9" fill="none" stroke="#111" stroke-width="1"/></svg>
</div>
<div class="abs" style="left:0;top:625px;width:1px;height:151px;background:#dfe3e8"></div>
<div class="abs" style="left:202px;top:625px;width:14px;height:151px;background:#f0f0f0;border-top:1px solid #f6f9fc"></div>
<svg class="abs" style="left:203px;top:625px" width="13" height="12"><path d="M5 3 L8.6 5.6 L5 8.2 Z" fill="#000"/></svg>
<div class="abs" style="left:216px;top:625px;width:960px;height:1px;background:#98a0ac"></div>
<div class="tbl" style="left:216px;top:626px;width:960px;border-left:1px solid #707070;border-top:1px solid #646464">
<div class="vl" style="left:19px;top:0;height:24px;background:#e2e2e2"></div>
<div class="vl" style="left:20px;top:24px;height:140px"></div>
<div class="vl" style="left:53px;top:0;height:24px;background:#e2e2e2"></div>
<div class="vl" style="left:54px;top:24px;height:140px"></div>
<div class="vl" style="left:132px;top:0;height:24px;background:#e2e2e2"></div>
<div class="vl" style="left:133px;top:24px;height:140px"></div>
<div class="vl" style="left:193px;top:0;height:24px;background:#e2e2e2"></div>
<div class="vl" style="left:194px;top:24px;height:140px"></div>
<div class="vl" style="left:313px;top:0;height:24px;background:#e2e2e2"></div>
<div class="vl" style="left:314px;top:24px;height:140px"></div>
<div class="vl" style="left:413px;top:0;height:24px;background:#e2e2e2"></div>
<div class="vl" style="left:414px;top:24px;height:140px"></div>
<div class="vl" style="left:526px;top:0;height:24px;background:#e2e2e2"></div>
<div class="vl" style="left:527px;top:24px;height:140px"></div>
<div class="vl" style="left:626px;top:0;height:24px;background:#e2e2e2"></div>
<div class="vl" style="left:627px;top:24px;height:140px"></div>
<div class="vl" style="left:672px;top:0;height:24px;background:#e2e2e2"></div>
<div class="vl" style="left:673px;top:24px;height:140px"></div>
<div class="vl" style="left:772px;top:0;height:24px;background:#e2e2e2"></div>
<div class="vl" style="left:773px;top:24px;height:140px"></div>
<div class="vl" style="left:872px;top:0;height:24px;background:#e2e2e2"></div>
<div class="vl" style="left:873px;top:24px;height:140px"></div>
<div class="vl" style="left:982px;top:0;height:24px;background:#e2e2e2"></div>
<div class="vl" style="left:983px;top:24px;height:140px"></div>
<div class="hl" style="left:0;top:42px;width:960px"></div>
<div class="hl" style="left:0;top:61px;width:960px"></div>
<div class="hl" style="left:0;top:80px;width:960px"></div>
<div class="hl" style="left:0;top:99px;width:960px"></div>
<div class="hl" style="left:0;top:118px;width:960px"></div>
<div class="hl" style="left:0;top:137px;width:960px"></div>
<div class="hl" style="left:0;top:156px;width:960px"></div>
<span class="t" style="left:5.20px;top:5.14px;font-size:12px;line-height:14px;letter-spacing:-0.134px;color:#1a1a1a;">I..</span>
<span class="t" style="left:25.40px;top:5.14px;font-size:12px;line-height:14px;letter-spacing:1.527px;color:#1a1a1a;">#</span>
<span class="t" style="left:60.60px;top:5.14px;font-size:12px;line-height:14px;letter-spacing:0.102px;color:#1a1a1a;">Point From</span>
<span class="t" style="left:139.90px;top:5.14px;font-size:12px;line-height:14px;letter-spacing:0.070px;color:#1a1a1a;">Point To</span>
<span class="t" style="left:199.40px;top:5.14px;font-size:12px;line-height:14px;letter-spacing:0.082px;color:#1a1a1a;">Reflector Height (m)</span>
<span class="t" style="left:319.40px;top:5.14px;font-size:12px;line-height:14px;letter-spacing:0.081px;color:#1a1a1a;">Horizontal Circle</span>
<span class="t" style="left:421.40px;top:5.14px;font-size:12px;line-height:14px;letter-spacing:-0.135px;color:#1a1a1a;">Slope Distance (m)</span>
<span class="t" style="left:552.40px;top:5.14px;font-size:12px;line-height:14px;letter-spacing:0.207px;color:#1a1a1a;">Zenith Angle</span>
<span class="t" style="left:633.20px;top:5.14px;font-size:12px;line-height:14px;letter-spacing:-0.078px;color:#1a1a1a;">Type</span>
<span class="t" style="left:679.80px;top:5.14px;font-size:12px;line-height:14px;letter-spacing:-0.139px;color:#1a1a1a;">HAngle Residual</span>
<span class="t" style="left:781.90px;top:5.14px;font-size:12px;line-height:14px;letter-spacing:-0.170px;color:#1a1a1a;">ZAngle Residual</span>
<span class="t" style="left:878.80px;top:5.14px;font-size:12px;line-height:14px;letter-spacing:-0.071px;color:#1a1a1a;">Code</span>
<span class="t" style="left:25.60px;top:26.84px;font-size:12px;line-height:14px;letter-spacing:-0.173px;color:#1a1a1a;">46</span>
<span class="t" style="left:60.60px;top:26.84px;font-size:12px;line-height:14px;letter-spacing:-0.140px;color:#1a1a1a;">107</span>
<span class="t" style="left:140.20px;top:26.84px;font-size:12px;line-height:14px;letter-spacing:-0.279px;color:#1a1a1a;">111</span>
<span class="t" style="left:274.90px;top:26.84px;font-size:12px;line-height:14px;letter-spacing:-0.533px;color:#1a1a1a;">0.2180</span>
<span class="t" style="left:475.60px;top:26.84px;font-size:12px;line-height:14px;letter-spacing:-0.581px;color:#1a1a1a;">895.5965</span>
<span class="t" style="left:633.20px;top:26.84px;font-size:12px;line-height:14px;letter-spacing:-1.804px;color:#1a1a1a;">SS</span>
<span class="t" style="left:878.80px;top:26.84px;font-size:12px;line-height:14px;letter-spacing:-0.719px;color:#1a1a1a;">NEPSL-STP-01</span>
<span class="t" style="left:25.60px;top:45.84px;font-size:12px;line-height:14px;letter-spacing:-0.173px;color:#1a1a1a;">47</span>
<span class="t" style="left:60.60px;top:45.84px;font-size:12px;line-height:14px;letter-spacing:-0.140px;color:#1a1a1a;">107</span>
<span class="t" style="left:140.20px;top:45.84px;font-size:12px;line-height:14px;letter-spacing:-0.279px;color:#1a1a1a;">111</span>
<span class="t" style="left:274.90px;top:45.84px;font-size:12px;line-height:14px;letter-spacing:-0.533px;color:#1a1a1a;">0.2180</span>
<span class="t" style="left:475.60px;top:45.84px;font-size:12px;line-height:14px;letter-spacing:-0.581px;color:#1a1a1a;">895.5965</span>
<span class="t" style="left:633.20px;top:45.84px;font-size:12px;line-height:14px;letter-spacing:-1.804px;color:#1a1a1a;">SS</span>
<span class="t" style="left:878.80px;top:45.84px;font-size:12px;line-height:14px;letter-spacing:-0.719px;color:#1a1a1a;">NEPSL-STP-01</span>
<span class="t" style="left:25.60px;top:64.84px;font-size:12px;line-height:14px;letter-spacing:-0.173px;color:#1a1a1a;">48</span>
<span class="t" style="left:60.60px;top:64.84px;font-size:12px;line-height:14px;letter-spacing:-0.140px;color:#1a1a1a;">107</span>
<span class="t" style="left:140.20px;top:64.84px;font-size:12px;line-height:14px;letter-spacing:-0.823px;color:#1a1a1a;">1001</span>
<span class="t" style="left:274.90px;top:64.84px;font-size:12px;line-height:14px;letter-spacing:-0.533px;color:#1a1a1a;">0.2230</span>
<span class="t" style="left:349.70px;top:64.84px;font-size:12px;line-height:14px;letter-spacing:-0.209px;color:#1a1a1a;">0°00'02.10"</span>
<span class="t" style="left:475.60px;top:64.84px;font-size:12px;line-height:14px;letter-spacing:-0.581px;color:#1a1a1a;">755.8933</span>
<span class="t" style="left:556.40px;top:64.84px;font-size:12px;line-height:14px;letter-spacing:-0.239px;color:#1a1a1a;">87°22'20.40"</span>
<span class="t" style="left:633.20px;top:64.84px;font-size:12px;line-height:14px;letter-spacing:-1.104px;color:#1a1a1a;">BS</span>
<span class="t" style="left:878.80px;top:64.84px;font-size:12px;line-height:14px;letter-spacing:-0.719px;color:#1a1a1a;">NEPSL-STP-03</span>
<span class="t" style="left:25.60px;top:83.84px;font-size:12px;line-height:14px;letter-spacing:-0.173px;color:#1a1a1a;">49</span>
<span class="t" style="left:60.60px;top:83.84px;font-size:12px;line-height:14px;letter-spacing:-0.140px;color:#1a1a1a;">107</span>
<span class="t" style="left:140.20px;top:83.84px;font-size:12px;line-height:14px;letter-spacing:-0.823px;color:#1a1a1a;">1001</span>
<span class="t" style="left:274.90px;top:83.84px;font-size:12px;line-height:14px;letter-spacing:-0.533px;color:#1a1a1a;">0.2230</span>
<span class="t" style="left:475.60px;top:83.84px;font-size:12px;line-height:14px;letter-spacing:-0.581px;color:#1a1a1a;">755.8933</span>
<span class="t" style="left:633.20px;top:83.84px;font-size:12px;line-height:14px;letter-spacing:-1.104px;color:#1a1a1a;">BS</span>
<span class="t" style="left:878.80px;top:83.84px;font-size:12px;line-height:14px;letter-spacing:-0.719px;color:#1a1a1a;">NEPSL-STP-03</span>
<span class="t" style="left:25.60px;top:102.84px;font-size:12px;line-height:14px;letter-spacing:-0.173px;color:#1a1a1a;">50</span>
<span class="t" style="left:60.60px;top:102.84px;font-size:12px;line-height:14px;letter-spacing:-0.140px;color:#1a1a1a;">107</span>
<span class="t" style="left:140.20px;top:102.84px;font-size:12px;line-height:14px;letter-spacing:-0.823px;color:#1a1a1a;">1001</span>
<span class="t" style="left:274.90px;top:102.84px;font-size:12px;line-height:14px;letter-spacing:-0.533px;color:#1a1a1a;">0.2230</span>
<span class="t" style="left:475.60px;top:102.84px;font-size:12px;line-height:14px;letter-spacing:-0.581px;color:#1a1a1a;">755.8934</span>
<span class="t" style="left:633.20px;top:102.84px;font-size:12px;line-height:14px;letter-spacing:-1.104px;color:#1a1a1a;">BS</span>
<span class="t" style="left:878.80px;top:102.84px;font-size:12px;line-height:14px;letter-spacing:-0.719px;color:#1a1a1a;">NEPSL-STP-03</span>
<span class="t" style="left:25.60px;top:121.84px;font-size:12px;line-height:14px;letter-spacing:-0.173px;color:#1a1a1a;">51</span>
<span class="t" style="left:60.60px;top:121.84px;font-size:12px;line-height:14px;letter-spacing:-0.140px;color:#1a1a1a;">107</span>
<span class="t" style="left:140.20px;top:121.84px;font-size:12px;line-height:14px;letter-spacing:-0.823px;color:#1a1a1a;">1001</span>
<span class="t" style="left:274.90px;top:121.84px;font-size:12px;line-height:14px;letter-spacing:-0.533px;color:#1a1a1a;">0.2230</span>
<span class="t" style="left:349.70px;top:121.84px;font-size:12px;line-height:14px;letter-spacing:-0.209px;color:#1a1a1a;">0°00'02.00"</span>
<span class="t" style="left:475.60px;top:121.84px;font-size:12px;line-height:14px;letter-spacing:-0.581px;color:#1a1a1a;">755.8934</span>
<span class="t" style="left:556.40px;top:121.84px;font-size:12px;line-height:14px;letter-spacing:-0.239px;color:#1a1a1a;">87°22'20.00"</span>
<span class="t" style="left:633.20px;top:121.84px;font-size:12px;line-height:14px;letter-spacing:-1.104px;color:#1a1a1a;">BS</span>
<span class="t" style="left:878.80px;top:121.84px;font-size:12px;line-height:14px;letter-spacing:-0.719px;color:#1a1a1a;">NEPSL-STP-03</span>
<span class="t" style="left:25.60px;top:140.84px;font-size:12px;line-height:14px;letter-spacing:-0.173px;color:#1a1a1a;">52</span>
<span class="t" style="left:60.60px;top:140.84px;font-size:12px;line-height:14px;letter-spacing:-0.140px;color:#1a1a1a;">107</span>
<span class="t" style="left:140.20px;top:140.84px;font-size:12px;line-height:14px;letter-spacing:-0.823px;color:#1a1a1a;">1001</span>
<span class="t" style="left:274.90px;top:140.84px;font-size:12px;line-height:14px;letter-spacing:-0.533px;color:#1a1a1a;">0.2230</span>
<span class="t" style="left:475.60px;top:140.84px;font-size:12px;line-height:14px;letter-spacing:-0.581px;color:#1a1a1a;">755.8934</span>
<span class="t" style="left:633.20px;top:140.84px;font-size:12px;line-height:14px;letter-spacing:-1.104px;color:#1a1a1a;">BS</span>
<span class="t" style="left:878.80px;top:140.84px;font-size:12px;line-height:14px;letter-spacing:-0.719px;color:#1a1a1a;">NEPSL-STP-03</span>
<svg class="abs" style="left:-217px;top:-627px" width="260" height="776" viewBox="0 0 260 776"><path d="M228.5 655.5 L233.5 660.5 L228.5 665.5 L223.5 660.5 Z" fill="#fff" stroke="#008000" stroke-width="1.4"/><path d="M228.5 655.5 V665.5" stroke="#008000" stroke-width="1.3"/><path d="M231.7 668.1 L235.1 664.7 M232.3 664.5 H235.3 V667.5" fill="none" stroke="#111" stroke-width="1.1"/><path d="M228.5 674.5 L233.5 679.5 L228.5 684.5 L223.5 679.5 Z" fill="#fff" stroke="#008000" stroke-width="1.4"/><path d="M228.5 674.5 V684.5" stroke="#008000" stroke-width="1.3"/><path d="M231.7 687.1 L235.1 683.7 M232.3 683.5 H235.3 V686.5" fill="none" stroke="#111" stroke-width="1.1"/><path d="M228.5 693.5 L233.5 698.5 L228.5 703.5 L223.5 698.5 Z" fill="#008000" stroke="#008000" stroke-width="1.4"/><path d="M228.5 695.5 V701.5 M226.5 699.5 L228.5 701.5 L230.5 699.5" fill="none" stroke="#e8f4e8" stroke-width="1"/><path d="M231.7 706.1 L235.1 702.7 M232.3 702.5 H235.3 V705.5" fill="none" stroke="#111" stroke-width="1.1"/><path d="M228.5 712.5 L233.5 717.5 L228.5 722.5 L223.5 717.5 Z" fill="#008000" stroke="#008000" stroke-width="1.4"/><path d="M228.5 714.5 V720.5 M226.5 718.5 L228.5 720.5 L230.5 718.5" fill="none" stroke="#e8f4e8" stroke-width="1"/><path d="M231.7 725.1 L235.1 721.7 M232.3 721.5 H235.3 V724.5" fill="none" stroke="#111" stroke-width="1.1"/><path d="M228.5 731.5 L233.5 736.5 L228.5 741.5 L223.5 736.5 Z" fill="#008000" stroke="#008000" stroke-width="1.4"/><path d="M228.5 733.5 V739.5 M226.5 737.5 L228.5 739.5 L230.5 737.5" fill="none" stroke="#e8f4e8" stroke-width="1"/><path d="M231.7 744.1 L235.1 740.7 M232.3 740.5 H235.3 V743.5" fill="none" stroke="#111" stroke-width="1.1"/><path d="M228.5 750.5 L233.5 755.5 L228.5 760.5 L223.5 755.5 Z" fill="#008000" stroke="#008000" stroke-width="1.4"/><path d="M228.5 752.5 V758.5 M226.5 756.5 L228.5 758.5 L230.5 756.5" fill="none" stroke="#e8f4e8" stroke-width="1"/><path d="M231.7 763.1 L235.1 759.7 M232.3 759.5 H235.3 V762.5" fill="none" stroke="#111" stroke-width="1.1"/><path d="M228.5 769.5 L233.5 774.5 L228.5 779.5 L223.5 774.5 Z" fill="#008000" stroke="#008000" stroke-width="1.4"/><path d="M228.5 771.5 V777.5 M226.5 775.5 L228.5 777.5 L230.5 775.5" fill="none" stroke="#e8f4e8" stroke-width="1"/><path d="M231.7 782.1 L235.1 778.7 M232.3 778.5 H235.3 V781.5" fill="none" stroke="#111" stroke-width="1.1"/></svg>
</div>
</body></html>
